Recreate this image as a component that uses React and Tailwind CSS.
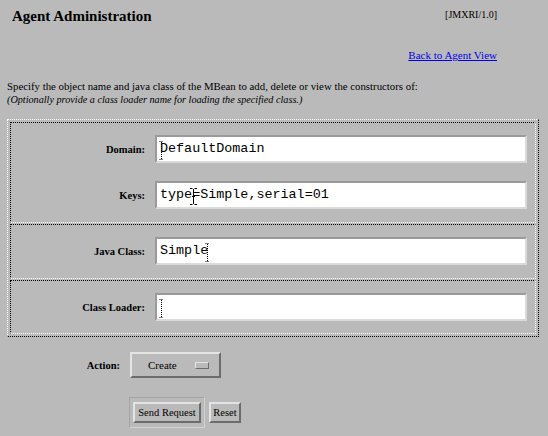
import React from 'react';

const Caret = ({ className }) => (
  <svg className={className} width="5" height="19" viewBox="0 0 5 19">
    <path d="M0.5 0.5h4M0.5 18.5h4" stroke="#000" strokeWidth="1" strokeDasharray="1 1" />
    <path d="M2.5 1v17" stroke="#000" strokeWidth="1" strokeDasharray="1 1" />
  </svg>
);

const IBeam = ({ className }) => (
  <svg className={className} width="7" height="17" viewBox="0 0 7 17">
    <path d="M0 0.5h2.5M4.5 0.5h2.5M0 16.5h2.5M4.5 16.5h2.5M3.5 1v15M2 8.5h3" stroke="#000" strokeWidth="1" />
  </svg>
);

const Field = ({ label, value, children }) => (
  <div className="flex items-center">
    <div className="w-[134px] text-right text-[10.5px] font-bold leading-[13px]">{label}</div>
    <div className="relative ml-[10px] mr-[8px] flex h-[28px] flex-1 items-center border-2 border-t-[#9a9a9a] border-l-[#9a9a9a] border-r-[#dadada] border-b-[#dadada] bg-white pl-[3px] font-['Liberation_Mono',monospace] text-[13.4px] leading-[16px]">
      {value}
      {children}
    </div>
  </div>
);

const Row = ({ className, children }) => (
  <div className={`border border-dotted border-t-black border-l-black border-r-white border-b-white ${className}`}>
    {children}
  </div>
);

const raised = 'border-2 border-t-[#e4e4e4] border-l-[#e4e4e4] border-r-[#6c6c6c] border-b-[#6c6c6c]';

export default function App() {
  return (
    <div className="relative h-[436px] w-[548px] overflow-hidden bg-[#bababa] font-['Liberation_Serif',serif] text-black">
      <div className="flex justify-between pl-[12px] pr-[51px] pt-[8px]">
        <h1 className="text-[15px] font-bold leading-[17px]">Agent Administration</h1>
        <span className="mt-[1px] text-[10px] leading-[12px]">[JMXRI/1.0]</span>
      </div>

      <div className="mt-[24px] pr-[51px] text-right text-[11px] leading-[13px]">
        <a href="#" className="text-[#0000ee] underline">Back to Agent View</a>
      </div>

      <div className="mt-[17px] pl-[7px]">
        <p className="text-[10.8px] leading-[14px]">
          Specify the object name and java class of the MBean to add, delete or view the constructors of:
        </p>
        <p className="text-[10.2px] italic leading-[14px]">
          (Optionally provide a class loader name for loading the specified class.)
        </p>
      </div>

      <div className="ml-[7px] mt-[12px] flex w-[532px] flex-col gap-[1px] border border-dotted border-t-white border-l-white border-r-black border-b-black p-[2px]">
        <Row className="flex flex-col gap-[18px] pb-[13px] pt-[12px]">
          <Field label="Domain:" value="DefaultDomain">
            <Caret className="absolute left-[2px] top-[4px]" />
          </Field>
          <Field label="Keys:" value="type=Simple,serial=01">
            <IBeam className="absolute left-[33px] top-[5px]" />
          </Field>
        </Row>
        <Row className="pb-[13px] pt-[12px]">
          <Field label="Java Class:" value="Simple">
            <Caret className="absolute left-[48px] top-[4px]" />
          </Field>
        </Row>
        <Row className="pb-[12px] pt-[12px]">
          <Field label="Class Loader:" value="">
            <Caret className="absolute left-[2px] top-[4px]" />
          </Field>
        </Row>
      </div>

      <div className="mt-[15px] flex items-center">
        <div className="ml-[85px] w-[35px] text-right text-[10.5px] font-bold leading-[13px]">Action:</div>
        <div className={`ml-[10px] flex h-[26px] w-[91px] items-center ${raised}`}>
          <span className="ml-[16px] text-[11px] leading-[13px]">Create</span>
          <span className="ml-[18px] h-[7px] w-[14px] border border-t-[#e4e4e4] border-l-[#e4e4e4] border-r-[#6c6c6c] border-b-[#6c6c6c]" />
        </div>
      </div>

      <div className="ml-[129px] mt-[19px] flex items-center">
        <div className="border border-t-[#a4a4a4] border-l-[#a4a4a4] border-r-[#d2d2d2] border-b-[#d2d2d2] px-[3px] py-[4px]">
          <button className={`flex h-[21px] w-[68px] items-center justify-center bg-[#bababa] text-[10.5px] leading-[13px] ${raised}`}>
            Send Request
          </button>
        </div>
        <button className={`ml-[4px] flex h-[21px] w-[32px] items-center justify-center bg-[#bababa] text-[10.5px] leading-[13px] ${raised}`}>
          Reset
        </button>
      </div>
    </div>
  );
}
